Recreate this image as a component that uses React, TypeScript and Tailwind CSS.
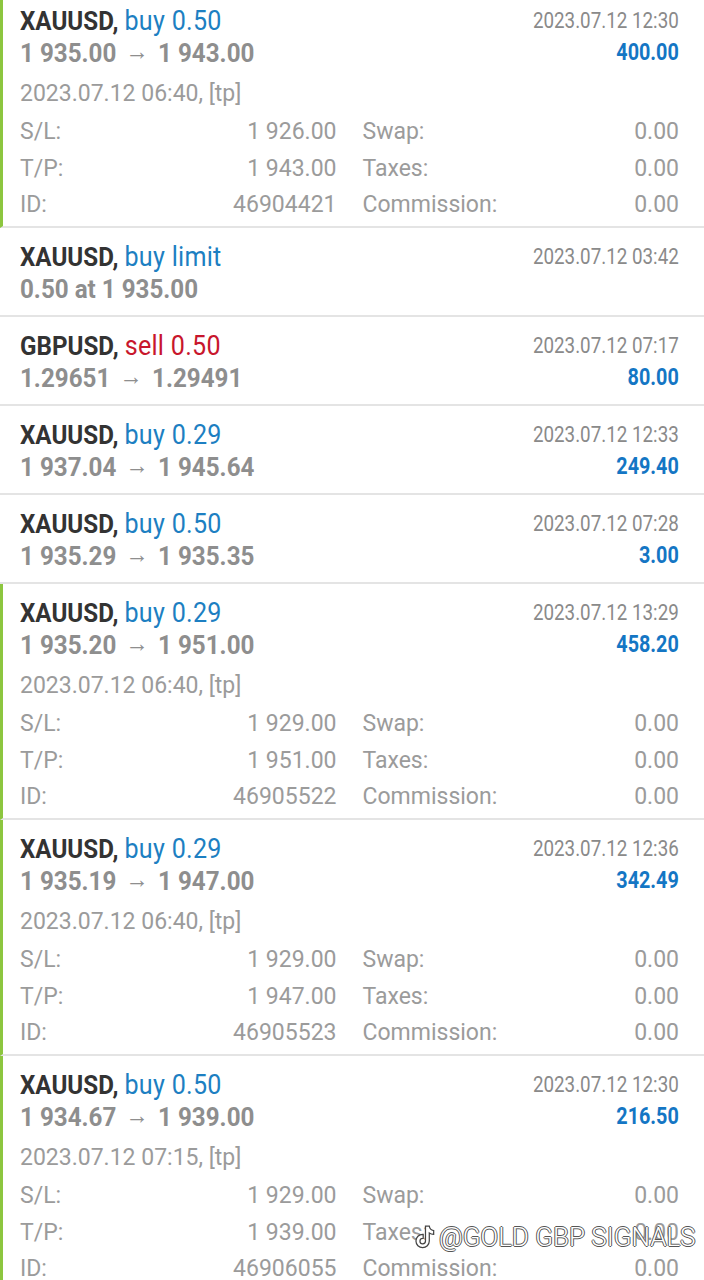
import React from 'react';

type Trade = {
  symbol: string;
  action: string;
  sell?: boolean;
  line2: React.ReactNode;
  time: string;
  profit?: string;
  details?: { open: string; sl: string; tp: string; id: string };
};

const Arrow = () => (
  <span className="relative -top-[2px] inline-block w-[45px] text-center align-baseline font-normal text-[25px] leading-none">→</span>
);

const trades: Trade[] = [
  {
    symbol: 'XAUUSD', action: 'buy 0.50', line2: <>1 935.00<Arrow />1 943.00</>, time: '2023.07.12 12:30', profit: '400.00',
    details: { open: '2023.07.12 06:40, [tp]', sl: '1 926.00', tp: '1 943.00', id: '46904421' },
  },
  { symbol: 'XAUUSD', action: 'buy limit', line2: '0.50 at 1 935.00', time: '2023.07.12 03:42' },
  { symbol: 'GBPUSD', action: 'sell 0.50', sell: true, line2: <>1.29651<Arrow />1.29491</>, time: '2023.07.12 07:17', profit: '80.00' },
  { symbol: 'XAUUSD', action: 'buy 0.29', line2: <>1 937.04<Arrow />1 945.64</>, time: '2023.07.12 12:33', profit: '249.40' },
  { symbol: 'XAUUSD', action: 'buy 0.50', line2: <>1 935.29<Arrow />1 935.35</>, time: '2023.07.12 07:28', profit: '3.00' },
  {
    symbol: 'XAUUSD', action: 'buy 0.29', line2: <>1 935.20<Arrow />1 951.00</>, time: '2023.07.12 13:29', profit: '458.20',
    details: { open: '2023.07.12 06:40, [tp]', sl: '1 929.00', tp: '1 951.00', id: '46905522' },
  },
  {
    symbol: 'XAUUSD', action: 'buy 0.29', line2: <>1 935.19<Arrow />1 947.00</>, time: '2023.07.12 12:36', profit: '342.49',
    details: { open: '2023.07.12 06:40, [tp]', sl: '1 929.00', tp: '1 947.00', id: '46905523' },
  },
  {
    symbol: 'XAUUSD', action: 'buy 0.50', line2: <>1 934.67<Arrow />1 939.00</>, time: '2023.07.12 12:30', profit: '216.50',
    details: { open: '2023.07.12 07:15, [tp]', sl: '1 929.00', tp: '1 939.00', id: '46906055' },
  },
];

function Row({ label, value }: { label: string; value: string }) {
  return (
    <div className="flex justify-between leading-[36.5px]">
      <span>{label}</span>
      <span>{value}</span>
    </div>
  );
}

function TradeItem({ t }: { t: Trade }) {
  const open = !!t.details;
  return (
    <div
      className={
        'border-b-2 border-[#e4e4e4] pr-[25px] ' +
        (open ? 'border-l-[3px] border-l-[#8cc63f] pl-[17px] pb-[2.5px]' : 'pl-5 pb-[10px]')
      }
    >
      <div className="flex justify-between pt-[13px]">
        <div className="font-bold text-[26px] leading-[32px] h-[64px]">
          <div className="origin-left scale-x-[0.93] whitespace-nowrap h-[32px]">
            <span className="text-[#333333]">{t.symbol}, </span>
            <span className={'font-normal text-[27px] tracking-[0.3px] ' + (t.sell ? 'text-[#c8162c]' : 'text-[#1d7fc2]')}>{t.action}</span>
          </div>
          <div className="origin-left scale-x-[0.93] whitespace-nowrap h-[32px] text-[#8e8e8e]">{t.line2}</div>
        </div>
        <div className="text-right">
          <div className="origin-right scale-x-[0.854] whitespace-nowrap text-[22px] leading-[32px] text-[#8a8a8a]">{t.time}</div>
          {t.profit && (
            <div className="origin-right scale-x-[0.86] font-bold text-[23px] leading-[32px] text-[#1476c4]">{t.profit}</div>
          )}
        </div>
      </div>
      {t.details && (
        <div className="text-[23px] text-[#9b9b9b]">
          <div className="mt-[9px] leading-[32px]">{t.details.open}</div>
          <div className="grid grid-cols-2 gap-x-[26px] mt-[4px]">
            <div>
              <Row label="S/L:" value={t.details.sl} />
              <Row label="T/P:" value={t.details.tp} />
              <Row label="ID:" value={t.details.id} />
            </div>
            <div>
              <Row label="Swap:" value="0.00" />
              <Row label="Taxes:" value="0.00" />
              <Row label="Commission:" value="0.00" />
            </div>
          </div>
        </div>
      )}
    </div>
  );
}

export default function App() {
  return (
    <div className="relative h-[1280px] overflow-hidden bg-white font-['Roboto',sans-serif]">
      <div className="-mt-[8px]">
        {trades.map((t, i) => (
          <TradeItem key={i} t={t} />
        ))}
      </div>
      {/* watermark */}
      <div className="absolute left-[415px] top-[1222px] flex items-center gap-[4px] text-white font-light text-[26px] leading-none whitespace-nowrap [text-shadow:1px_0_0_#555,-1px_0_0_#555,0_1px_0_#555,0_-1px_0_#555]">
        <svg width={20} height={30} viewBox="2 1 21 25" className="block shrink-0">
          <path
            d="M13 2h4c.3 2.6 2 4.4 4.6 4.7v4c-1.8 0-3.4-.5-4.6-1.4v8.4a7 7 0 1 1-7-7h.6v4.2H10a2.9 2.9 0 1 0 3 2.9z"
            fill="#ffffff"
            stroke="#444444"
            strokeWidth={1.3}
          />
        </svg>
        <span>@GOLD GBP SIGNALS</span>
      </div>
    </div>
  );
}
